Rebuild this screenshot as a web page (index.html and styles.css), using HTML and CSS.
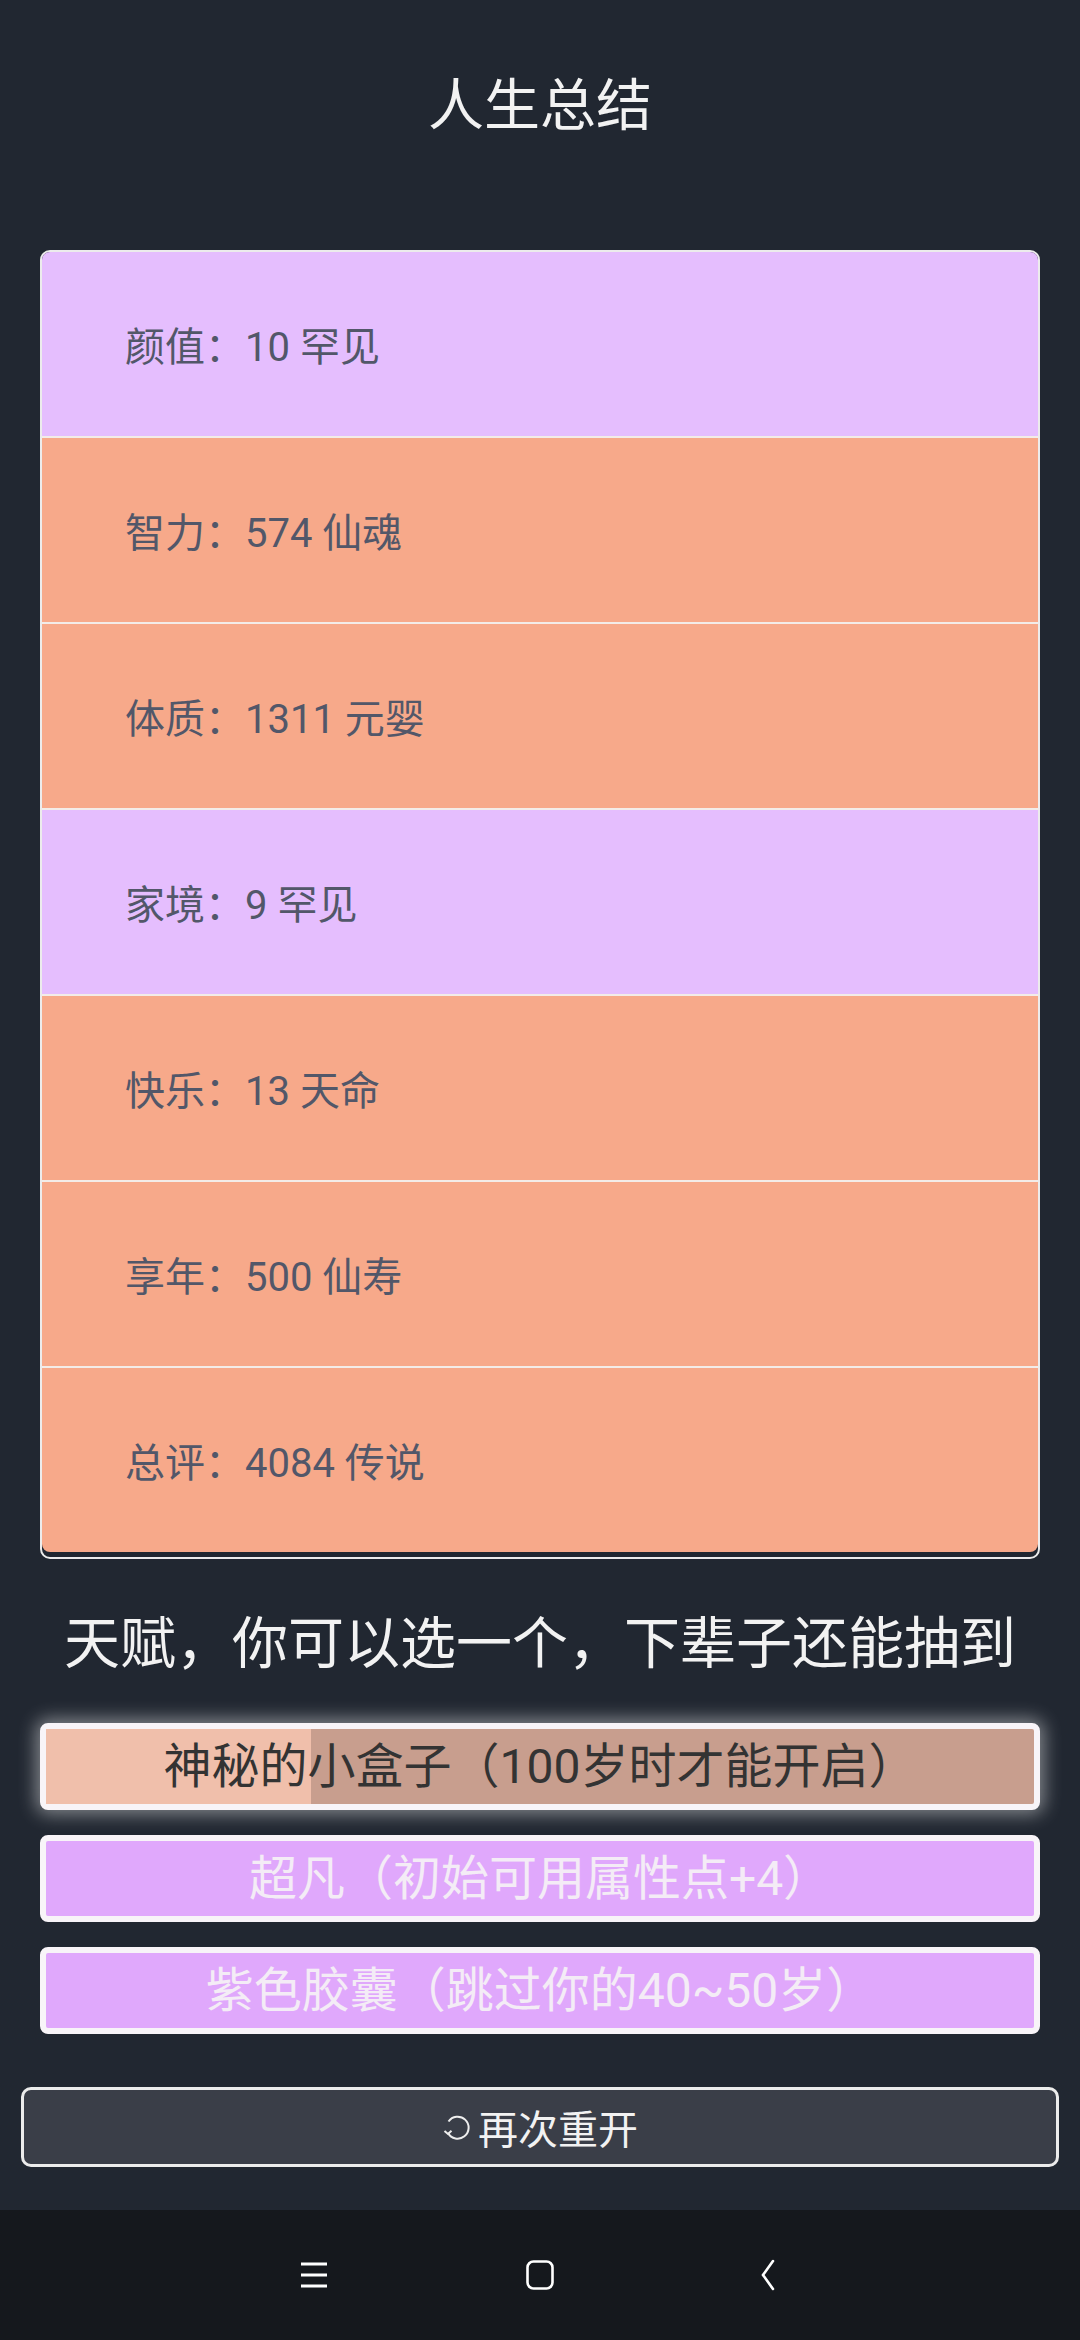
FILE: index.html
```html
<!DOCTYPE html>
<html lang="zh">
<head>
<meta charset="utf-8">
<title>人生总结</title>
<link rel="stylesheet" href="styles.css">
</head>
<body>
<div class="screen">
  <main class="app">
    <h1 class="title">人生总结</h1>
    <ul class="summary">
      <li class="row purple">颜值：10 罕见</li>
      <li class="row orange">智力：574 仙魂</li>
      <li class="row orange">体质：1311 元婴</li>
      <li class="row purple">家境：9 罕见</li>
      <li class="row orange">快乐：13 天命</li>
      <li class="row orange">享年：500 仙寿</li>
      <li class="row orange last">总评：4084 传说</li>
    </ul>
    <h2 class="subtitle">天赋，你可以选一个，下辈子还能抽到</h2>
    <ul class="talents">
      <li class="talent selected">
        <span class="fill" style="width: 26.8%"></span>
        <span class="label">神秘的小盒子（100岁时才能开启）</span>
      </li>
      <li class="talent violet"><span class="label">超凡（初始可用属性点+4）</span></li>
      <li class="talent violet"><span class="label">紫色胶囊（跳过你的40~50岁）</span></li>
    </ul>
    <button class="restart">
      <svg class="restart-icon" viewBox="0 0 30 30" width="30" height="30">
        <path d="M6.5 9.5 A11 11 0 1 1 6 21" fill="none" stroke="#eeeeee" stroke-width="2"/>
        <path d="M2.5 19 L6 22 L9.5 18.8" fill="none" stroke="#eeeeee" stroke-width="2"/>
      </svg>
      <span>再次重开</span>
    </button>
  </main>
  <nav class="navbar">
    <svg class="nav-icon" viewBox="0 0 40 40" width="40" height="40">
      <path d="M7 9 H33 M7 20 H33 M7 31 H33" stroke="#ffffff" stroke-width="3" fill="none"/>
    </svg>
    <svg class="nav-icon" viewBox="0 0 40 40" width="40" height="40">
      <rect x="7.5" y="6.5" width="25" height="27" rx="6" ry="6" stroke="#ffffff" stroke-width="2.6" fill="none"/>
    </svg>
    <svg class="nav-icon" viewBox="0 0 40 40" width="40" height="40">
      <path d="M27 6 L17 20 L27 34" stroke="#ffffff" stroke-width="2.6" fill="none" stroke-linecap="round"/>
    </svg>
  </nav>
</div>
</body>
</html>
```

FILE: styles.css
```css
* {
  box-sizing: border-box;
}

html, body {
  margin: 0;
  padding: 0;
}

body {
  width: 1080px;
  height: 2340px;
  background: #212731;
  font-family: Roboto, "Noto Sans CJK SC", "Noto Sans", sans-serif;
  overflow: hidden;
}

.screen {
  display: flex;
  flex-direction: column;
  height: 2340px;
}

.app {
  height: 2210px;
  display: flex;
  flex-direction: column;
  background: #212731;
}

.title {
  margin: 0;
  padding-top: 66px;
  font-size: 56px;
  line-height: 80px;
  font-weight: 400;
  color: #f2f2f2;
  text-align: center;
}

.summary {
  list-style: none;
  margin: 104px 40px 0;
  padding: 0 0 5px;
  border: 2px solid #ececec;
  border-radius: 10px;
  overflow: hidden;
  display: flex;
  flex-direction: column;
}

.row {
  height: 186px;
  display: flex;
  align-items: center;
  padding-left: 83px;
  font-size: 40px;
  color: #525769;
  border-top: 2px solid #f3ece8;
}

.row:first-child {
  height: 184px;
  border-top: none;
}

.row.last {
  border-radius: 0 0 8px 8px;
}

.purple {
  background: #e5befe;
}

.orange {
  background: #f7a98a;
}

.subtitle {
  margin: 45px 0 0;
  font-size: 56px;
  line-height: 80px;
  font-weight: 400;
  color: #f2f2f2;
  text-align: center;
}

.talents {
  list-style: none;
  margin: 39px 40px 0;
  padding: 0;
  display: flex;
  flex-direction: column;
  gap: 25px;
}

.talent {
  position: relative;
  height: 87px;
  border: 6px solid #f8f4f8;
  border-radius: 8px;
  display: flex;
  align-items: center;
  justify-content: center;
  overflow: hidden;
  font-size: 48px;
}

.talent.selected {
  background: #c89e8e;
  color: #333333;
  box-shadow: 0 0 18px 4px rgba(255, 255, 255, 0.45);
  overflow: visible;
}

.talent .fill {
  position: absolute;
  left: 0;
  top: 0;
  bottom: 0;
  background: #f0bfab;
}

.talent .label {
  position: relative;
  line-height: 1;
}

.talent.violet {
  background: #e0a8fc;
  color: #f4ecf6;
}

.restart {
  margin: 53px 21px 0;
  height: 80px;
  border: 3px solid #ececec;
  border-radius: 10px;
  background: #3a3e48;
  color: #f2f2f2;
  font-family: Roboto, "Noto Sans CJK SC", sans-serif;
  font-size: 40px;
  display: flex;
  align-items: center;
  justify-content: center;
  gap: 6px;
  padding: 0;
}

.restart-icon {
  display: block;
}

.navbar {
  height: 130px;
  background: #15181d;
  display: flex;
  align-items: center;
  justify-content: center;
  gap: 186px;
}

.nav-icon {
  display: block;
}
```
